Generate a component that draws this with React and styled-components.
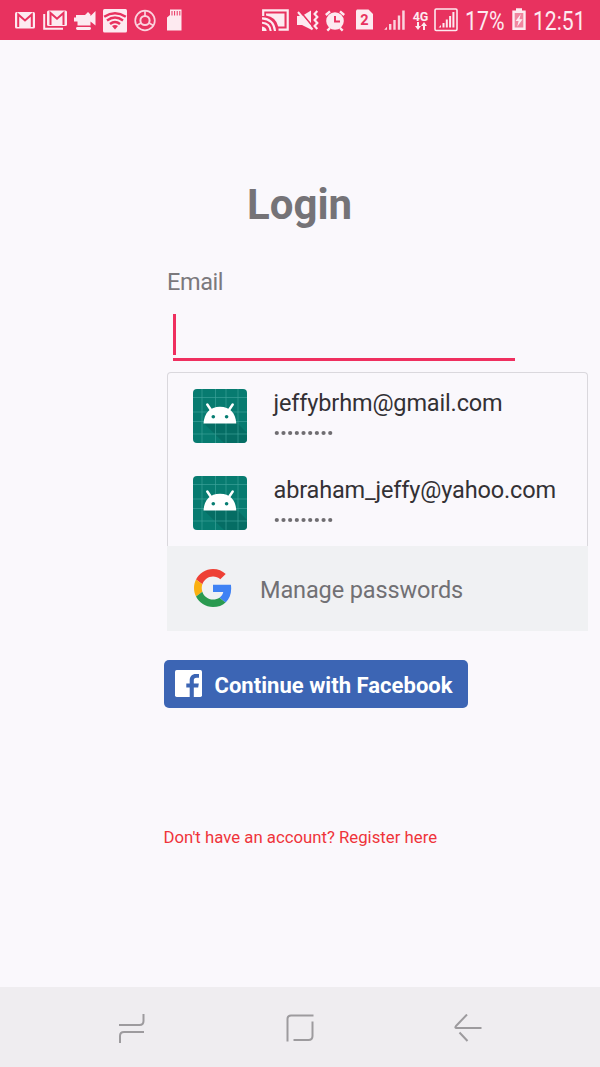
import React from 'react';
import styled, { createGlobalStyle } from 'styled-components';

const PINK = '#e8325f';

const GlobalStyle = createGlobalStyle`
  *, *::before, *::after { box-sizing: border-box; }
  body { margin: 0; background: #faf8fc; font-family: Roboto, "Liberation Sans", sans-serif; }
`;

const Screen = styled.div`
  width: 600px;
  height: 1067px;
  display: flex;
  flex-direction: column;
  background: #faf8fc;
  overflow: hidden;
`;

const StatusBar = styled.header`
  height: 40px;
  flex: none;
  display: flex;
  justify-content: space-between;
  background: ${PINK};
  color: #fdeaf0;
  padding: 0 15px;
`;

const StatusGroup = styled.div`
  display: flex;
  align-items: center;
`;

const StatusIcon = styled.svg`
  display: block;
  flex: none;
  height: 40px;
  width: ${(p) => p.$w}px;
  margin-left: ${(p) => p.$gap || 0}px;
  fill: #fdeaf0;
`;

const StatusText = styled.div`
  width: ${(p) => p.$w}px;
  margin-left: ${(p) => p.$gap}px;
  height: 40px;
  flex: none;
  font-size: 25px;
  line-height: 43px;
  white-space: nowrap;

  span {
    display: inline-block;
    transform: scaleX(${(p) => p.$stretch});
    transform-origin: left center;
  }
`;

const Network = styled.div`
  width: 17px;
  margin-left: 7px;
  height: 40px;
  flex: none;
  display: flex;
  flex-direction: column;
  align-items: center;
  padding-top: 11px;
  font-size: 12.5px;
  font-weight: 700;
  line-height: 11px;
  svg { fill: #fdeaf0; }
`;

const Main = styled.main`
  flex: 1;
  padding: 140px 12px 0 164px;
`;

const Title = styled.h1`
  margin: 0 0 0 -164px;
  width: 599px;
  height: 50px;
  font-size: 42px;
  line-height: 50px;
  font-weight: 700;
  text-align: center;
  color: #757377;
`;

const Label = styled.label`
  display: block;
  margin: 37px 0 0 3px;
  font-size: 23.5px;
  line-height: 30px;
  letter-spacing: -0.4px;
  color: #7b797d;
`;

const Field = styled.div`
  margin: 17px 0 0 9px;
  width: 342px;
  height: 47px;
  border-bottom: 3px solid #ef2f5f;
`;

const Caret = styled.div`
  width: 3px;
  height: 41px;
  background: #ef2f5f;
`;

const Suggestions = styled.section`
  margin: 11px 0 0 3px;
  width: 421px;
`;

const Accounts = styled.ul`
  list-style: none;
  margin: 0;
  padding: 16px 0 0 25px;
  height: 174px;
  border: 1px solid #dad8dd;
  border-bottom: 0;
  border-radius: 4px 4px 0 0;
`;

const Account = styled.li`
  height: 87px;
  display: flex;
  gap: 26px;
`;

const AccountText = styled.div`
  flex: 1;
`;

const AccountName = styled.div`
  font-size: 23.5px;
  line-height: 28px;
  letter-spacing: -0.15px;
  padding-left: 0.5px;
  color: #333135;
  white-space: nowrap;
`;

const Mask = styled.svg`
  display: block;
  margin: 12.5px 0 0 1px;
  fill: #6f6d71;
`;

const Manage = styled.div`
  height: 85px;
  padding-left: 27px;
  display: flex;
  align-items: center;
  gap: 28px;
  background: #f0f1f3;
  color: #717074;
  font-size: 23.5px;
  letter-spacing: -0.12px;
  line-height: 30px;
  svg { margin-bottom: 1px; }
  span { padding-top: 3px; }
`;

const FacebookButton = styled.button`
  margin: 29px 0 0;
  width: 304px;
  height: 48px;
  display: flex;
  align-items: center;
  gap: 13px;
  padding: 0 0 0 10.5px;
  border: 0;
  border-radius: 5px;
  background: #3c65b4;
  color: #fff;
  font: 700 22px/28px Roboto, "Liberation Sans", sans-serif;
  letter-spacing: 0.03px;
  white-space: nowrap;
  svg { margin-bottom: 1px; }
  span { padding-top: 4px; }
`;

const Register = styled.a`
  display: block;
  margin: 118px 0 0 -0.5px;
  font-size: 16.75px;
  line-height: 23px;
  color: #ef343a;
  white-space: nowrap;
`;

const NavBar = styled.nav`
  height: 80px;
  flex: none;
  display: flex;
  justify-content: center;
  align-items: center;
  gap: 140px;
  padding-top: 1px;
  background: #efedf0;
  svg { fill: none; stroke: #9d9b9e; stroke-width: 2; stroke-linejoin: round; }
`;

const Gmail = () => (
  <StatusIcon $w={20} viewBox="15 0 20 40">
    <rect x="15" y="12" width="20" height="16.5" rx="1.5" />
    <path d="M18.2 27V14.5L25 20.5L31.8 14.5V27" fill="none" stroke={PINK} strokeWidth="2" />
  </StatusIcon>
);

const GmailStack = () => (
  <StatusIcon $w={24} $gap={8} viewBox="43 0 24 40">
    <path d="M44.2 14V28.8H63" fill="none" stroke="#fdeaf0" strokeWidth="2" />
    <rect x="47" y="10.5" width="20" height="15.5" rx="1.5" />
    <path d="M50.5 25V13L57 18.7L63.5 13V25" fill="none" stroke={PINK} strokeWidth="2" />
  </StatusIcon>
);

const Video = () => (
  <StatusIcon $w={22} $gap={7} viewBox="74 0 22 40">
    <path d="M76 15H85L88 12L90.5 14.5V16L95.5 11V25.5L90.5 21.5V25.5H77.5V21.5H74V17.5H76Z" />
    <rect x="76" y="27" width="15" height="3" rx="1.4" />
  </StatusIcon>
);

const WifiBadge = () => (
  <StatusIcon $w={24} $gap={7} viewBox="103 0 24 40">
    <rect x="103" y="9" width="24" height="23.5" rx="1.5" />
    <g fill="none" stroke={PINK} strokeWidth="2.5">
      <path d="M104.2 16.8Q115 9.8 125.8 16.8" />
      <path d="M107 20.4Q115 14.7 123 20.4" />
      <path d="M110 24Q115 20 120 24" />
    </g>
    <path d="M112 26Q115 23.8 118 26L115 29.5Z" fill={PINK} />
  </StatusIcon>
);

const Ring = () => (
  <StatusIcon $w={22} $gap={7} viewBox="134 0 22 40">
    <g fill="none" stroke="#fbd3de" strokeWidth="1.7">
      <circle cx="145" cy="20.5" r="9.8" />
      <circle cx="145" cy="20.5" r="4.6" strokeWidth="2" />
      <path d="M145 10.7V16M149 23L153.4 25.4M141 23L136.6 25.4" />
    </g>
  </StatusIcon>
);

const SdCard = () => (
  <StatusIcon $w={15} $gap={11} viewBox="167 0 15 40">
    <path d="M170 9.5H181.5V30.5H167V17.5L170 15Z" />
    <path d="M172 11V15.5M174.6 11V15.5M177.2 11V15.5M179.8 11V15.5" stroke={PINK} strokeWidth="1" />
  </StatusIcon>
);

const Cast = () => (
  <StatusIcon $w={27} viewBox="262 0 27 40">
    <path d="M263.2 16V10.3H287.7V29.7H278.5" fill="none" stroke="#fdeaf0" strokeWidth="2.2" />
    <path d="M266 13.5H284.5V26.5H278.2Q276 17 266 15.5Z" />
    <g fill="none" stroke="#fdeaf0" strokeWidth="2.1">
      <path d="M262 18.4Q273.6 18.9 275 31" />
      <path d="M262 22.7Q269.8 23.2 270.7 31" />
    </g>
    <path d="M262 26.5Q266.3 27 266.7 31H262Z" />
  </StatusIcon>
);

const MuteVibrate = () => (
  <StatusIcon $w={22} $gap={8} viewBox="297 0 22 40">
    <path d="M297 16H302L311 10.5V29.5L302 25H297Z" />
    <path d="M299.5 10.5L314 28" stroke={PINK} strokeWidth="1.6" />
    <path d="M298 12L312.5 29.5" stroke="#fdeaf0" strokeWidth="2" />
    <path d="M317.3 11L314.6 14L317.3 17L314.6 20L317.3 23L314.6 26L317.3 29" fill="none" stroke="#fdeaf0" strokeWidth="2.2" />
  </StatusIcon>
);

const Alarm = () => (
  <StatusIcon $w={20} $gap={6} viewBox="325 0 20 40">
    <circle cx="335" cy="21" r="8.8" />
    <path d="M325.8 15L330 11.3M344.2 15L340 11.3M330 28L327.3 30.6M340 28L342.7 30.6" stroke="#fdeaf0" strokeWidth="2.4" />
    <path d="M335 16V21.5H340" fill="none" stroke={PINK} strokeWidth="1.9" />
  </StatusIcon>
);

const Sim = () => (
  <StatusIcon $w={17} $gap={11} viewBox="356 0 17 40">
    <path d="M357 9.5H368.5L373 14V29.5H356V10.5Z" />
    <text x="364.3" y="25.3" fontSize="14.5" fontWeight="700" textAnchor="middle" fill={PINK}>2</text>
  </StatusIcon>
);

const Signal = () => (
  <StatusIcon $w={21} $gap={11} viewBox="384 0 21 40">
    <path d="M384.2 29.8L387 26.8V29.8ZM389 24H391.4V29.8H389ZM393.3 20H395.7V29.8H393.3ZM397.8 15.5H400.2V29.8H397.8ZM402.2 10.5H404.7V29.8H402.2Z" opacity=".88" />
  </StatusIcon>
);

const BoxedSignal = () => (
  <StatusIcon $w={24} $gap={5} viewBox="434 0 24 40">
    <rect x="435" y="9" width="22" height="21.5" rx="1.2" fill="none" stroke="#fdeaf0" strokeWidth="1.6" />
    <path d="M438.5 27.5L441 25V27.5ZM442.5 23H444.5V27.5H442.5ZM445.8 19.5H447.8V27.5H445.8ZM449.1 16H451.1V27.5H449.1ZM452.4 12H454.4V27.5H452.4Z" />
  </StatusIcon>
);

const Battery = () => (
  <StatusIcon $w={14} $gap={8} viewBox="512 0 14 40">
    <path d="M516 8.3H522V10.5H525.7V30H512.3V10.5H516Z" />
    <rect x="514.7" y="13" width="8.6" height="14.5" fill={PINK} opacity=".55" />
    <path d="M520.8 14L515.6 21H518.6L517.2 26.8L522.6 19.2H519.4Z" />
  </StatusIcon>
);

const AndroidIcon = () => (
  <svg width="54" height="54" viewBox="0 0 54 54">
    <rect width="54" height="54" rx="4" fill="#077b70" />
    <path d="M43 33L54 44V50Q54 54 50 54H31L11 34.5Z" fill="#056b62" opacity=".85" />
    <path d="M9 0V54M22.5 0V54M33 0V54M45 0V54M0 8.5H54M0 23H54M0 32.5H54M0 45H54" stroke="#3da299" strokeWidth=".9" opacity=".75" fill="none" />
    <path d="M10.5 34.5C11.2 24 17 17.8 27 17.8S42.6 24 43.3 34.5Z" fill="#fff" />
    <path d="M14.3 15.5L19 22.5M39.7 15.5L35 22.5" stroke="#fff" strokeWidth="2.5" strokeLinecap="round" />
    <circle cx="20.3" cy="27.7" r="1.8" fill="#067d72" />
    <circle cx="33.6" cy="27.7" r="1.8" fill="#067d72" />
  </svg>
);

const GoogleLogo = () => (
  <svg width="38" height="38" viewBox="0 0 48 48">
    <path fill="#EE4035" d="M24 9.5c3.54 0 6.71 1.22 9.21 3.6l6.85-6.85C35.9 2.38 30.47 0 24 0 14.62 0 6.51 5.38 2.56 13.22l7.98 6.19C12.43 13.72 17.74 9.5 24 9.5z" />
    <path fill="#3f82f4" d="M46.98 24.55c0-1.57-.15-3.09-.38-4.55H24v9.02h12.94c-.58 2.96-2.26 5.48-4.78 7.18l7.73 6c4.51-4.18 7.09-10.36 7.09-17.65z" />
    <path fill="#fbb010" d="M10.53 28.59c-.48-1.45-.76-2.99-.76-4.59s.27-3.14.76-4.59l-7.98-6.19C.92 16.46 0 20.12 0 24c0 3.88.92 7.54 2.56 10.78l7.97-6.19z" />
    <path fill="#2a9a50" d="M24 48c6.48 0 11.93-2.13 15.89-5.81l-7.73-6c-2.15 1.45-4.92 2.3-8.16 2.3-6.26 0-11.57-4.22-13.47-9.91l-7.98 6.19C6.51 42.62 14.62 48 24 48z" />
  </svg>
);

const FacebookLogo = () => (
  <svg width="27" height="27" viewBox="0 0 27 27">
    <rect width="27" height="27" rx="1.7" fill="#fff" />
    <path d="M14.7 27V17.5H11.3V13.5H14.7V10.5C14.7 6.5 17 4 20.7 4H24V7.8H21.5C19.5 7.8 18.8 8.8 18.8 10.5V13.5H23.8L23.2 17.5H18.8V27Z" fill="#3c65b4" />
  </svg>
);

const PasswordMask = () => (
  <Mask width="60" height="6" viewBox="0 0 60 6">
    {Array.from({ length: 9 }, (_, i) => (
      <circle key={i} cx={2.8 + i * 6.68} cy="3" r="2.1" />
    ))}
  </Mask>
);

const accounts = ['jeffybrhm@gmail.com', 'abraham_jeffy@yahoo.com'];

export default function App() {
  return (
    <Screen>
      <GlobalStyle />
      <StatusBar>
        <StatusGroup>
          <Gmail />
          <GmailStack />
          <Video />
          <WifiBadge />
          <Ring />
          <SdCard />
        </StatusGroup>
        <StatusGroup>
          <Cast />
          <MuteVibrate />
          <Alarm />
          <Sim />
          <Signal />
          <Network>
            4G
            <svg width="12" height="8" viewBox="0 0 12 8">
              <path d="M2 0H4V4H6L3 8L0 4H2ZM8 8H10V4H12L9 0L6 4H8Z" />
            </svg>
          </Network>
          <BoxedSignal />
          <StatusText $w={39} $gap={7} $stretch={0.85}><span>17%</span></StatusText>
          <Battery />
          <StatusText $w={52} $gap={7} $stretch={0.845}><span>12:51</span></StatusText>
        </StatusGroup>
      </StatusBar>
      <Main>
        <Title>Login</Title>
        <Label>Email</Label>
        <Field><Caret /></Field>
        <Suggestions>
          <Accounts>
            {accounts.map((name) => (
              <Account key={name}>
                <AndroidIcon />
                <AccountText>
                  <AccountName>{name}</AccountName>
                  <PasswordMask />
                </AccountText>
              </Account>
            ))}
          </Accounts>
          <Manage>
            <GoogleLogo />
            <span>Manage passwords</span>
          </Manage>
        </Suggestions>
        <FacebookButton>
          <FacebookLogo />
          <span>Continue with Facebook</span>
        </FacebookButton>
        <Register>Don't have an account? Register here</Register>
      </Main>
      <NavBar>
        <svg width="28" height="30" viewBox="0 0 28 30">
          <path d="M1 12H21.5Q25.5 12 25.5 8V1M26 19H6Q2 19 2 23V30" />
        </svg>
        <svg width="28" height="28" viewBox="0 0 28 28">
          <path d="M1.5 27.5V5Q1.5 1.5 5 1.5H27.5M26.5 7.5V22Q26.5 26 22.5 26H7.5" />
        </svg>
        <svg width="28" height="28" viewBox="0 0 28 28">
          <path d="M13 0.5L2 12Q0.5 14 2.5 14H27.5M5.5 18.5L13.5 27" />
        </svg>
      </NavBar>
    </Screen>
  );
}
